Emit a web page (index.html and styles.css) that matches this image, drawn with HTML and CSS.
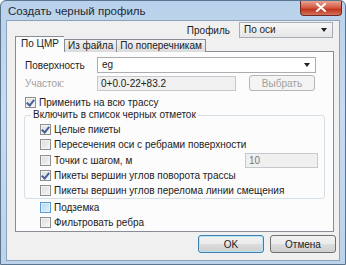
FILE: index.html
```html
<!DOCTYPE html>
<html lang="ru">
<head>
    <meta charset="UTF-8">
    <title>Создать черный профиль</title>
    <link rel="stylesheet" href="styles.css">
</head>
<body>
<div class="window">
    <div class="titlebar">
        <span class="title">Создать черный профиль</span>
        <span class="close">
            <svg width="12" height="9" viewBox="0 0 12 9"><path d="M2 1 L10 8 M10 1 L2 8" stroke="#fff" stroke-width="2.2" stroke-linecap="round"/></svg>
        </span>
    </div>
    <div class="client">
        <div class="profile-row">
            <span class="lbl">Профиль</span>
            <div class="combo combo-profile">По оси<span class="arrow"></span></div>
        </div>
        <div class="tabs">
            <div class="tab active">По ЦМР</div>
            <div class="tab">Из файла</div>
            <div class="tab">По поперечникам</div>
        </div>
        <div class="panel">
            <div class="row">
                <span class="field-lbl">Поверхность</span>
                <div class="combo combo-surface">eg<span class="arrow"></span></div>
            </div>
            <div class="row">
                <span class="field-lbl disabled">Участок:</span>
                <div class="textbox readonly range">0+0.0-22+83.2</div>
                <button class="btn btn-small" disabled>Выбрать</button>
            </div>
            <label class="check whole"><span class="box checked"></span>Применить на всю трассу</label>
            <div class="group">
                <div class="legend">Включить в список черных отметок</div>
                <label class="check"><span class="box checked"></span>Целые пикеты</label>
                <label class="check"><span class="box"></span>Пересечения оси с ребрами поверхности</label>
                <div class="check step">
                    <span class="box"></span>Точки с шагом, м
                    <div class="textbox readonly stepbox">10</div>
                </div>
                <label class="check"><span class="box checked"></span>Пикеты вершин углов поворота трассы</label>
                <label class="check"><span class="box"></span>Пикеты вершин углов перелома линии смещения</label>
            </div>
            <label class="check outer first"><span class="box hover"></span>Подземка</label>
            <label class="check outer"><span class="box"></span>Фильтровать ребра</label>
        </div>
        <div class="buttons">
            <button class="btn btn-default">OK</button>
            <button class="btn">Отмена</button>
        </div>
    </div>
</div>
</body>
</html>
```

FILE: styles.css
```css
body { margin: 0; padding: 0; background: #fff; font-family: "Liberation Sans", Arial, sans-serif; font-size: 10px; color: #222; }
.window { width: 346px; height: 265px; background: linear-gradient(to bottom, #b9d1ea, #c7dcf2 40%, #bcd3eb); box-sizing: border-box; border: 1px solid #5b7490; border-radius: 6px 6px 0 0; display: flex; flex-direction: column; }
.titlebar { height: 19px; display: flex; align-items: center; justify-content: space-between; padding-left: 7px; }
.title { font-size: 11.5px; color: #1e2a36; margin-top: 1px; }
.close { width: 40px; height: 14px; margin-right: 3px; margin-top: -5px; border: 1px solid #6e2b25; border-top: none; border-radius: 0 0 4px 4px; background: linear-gradient(to bottom, #e8a493, #d2563e 50%, #c0361f 60%, #d4705a); display: flex; align-items: center; justify-content: center; }
.client { margin: 0 5px 0 5px; height: 239px; background: #f0f0f0; border: 1px solid #8da2b9; display: flex; flex-direction: column; }
.profile-row { display: flex; justify-content: flex-end; align-items: center; height: 16px; margin-top: 1px; padding-right: 6px; }
.profile-row .lbl { margin-right: 9px; }
.combo { position: relative; height: 16px; box-sizing: border-box; border: 1px solid #a5acb5; background: linear-gradient(#f6f6f6, #e6e6e6); padding-left: 4px; line-height: 14px; }
.combo-profile { width: 94px; }
.combo-surface { width: 219px; background: #fff; border-color: #abadb3; }
.arrow { position: absolute; right: 5px; top: 5px; border-left: 3.5px solid transparent; border-right: 3.5px solid transparent; border-top: 4px solid #222; }
.tabs { display: flex; align-items: flex-end; height: 15px; margin-left: 8px; margin-top: -1px; position: relative; z-index: 1; }
.tab { height: 12px; line-height: 12px; padding: 0 3px; border: 1px solid #898c95; border-bottom: none; margin-right: -1px; background: linear-gradient(#f2f2f2, #dcdcdc); }
.tab.active { height: 15px; line-height: 14px; background: #fcfcfc; padding: 0 5px; margin-right: 0; border-right: none; }
.panel { margin-left: 8px; width: 319px; height: 181px; box-sizing: border-box; border: 1px solid #898c95; background: #fcfcfc; margin-top: -1px; padding: 4px 0 0 9px; }
.row { display: flex; align-items: center; height: 18px; }
.field-lbl { width: 72px; }
.disabled { color: #a0a0a0; }
.textbox { height: 15px; box-sizing: border-box; border: 1px solid #c6c8cc; background: #fff; padding-left: 3px; line-height: 13px; }
.textbox.readonly { background: #f0f0f0; }
.range { width: 139px; margin-right: 13px; }
.btn { font-family: inherit; font-size: 10px; color: #222; height: 18px; box-sizing: border-box; border: 1px solid #707070; border-radius: 3px; background: linear-gradient(#f2f2f2 0%, #ebebeb 50%, #dddddd 51%, #cfcfcf 100%); padding: 0; }
.btn:disabled { color: #a0a0a0; border-color: #b5b5b5; background: #f4f4f4; }
.btn-small { width: 66px; height: 16px; }
.check { display: flex; align-items: center; height: 15px; }
.box { flex: none; width: 9px; height: 9px; border: 1px solid #8e8f8f; background: linear-gradient(135deg, #dcdcdc, #f6f6f6); margin-right: 3px; position: relative; box-shadow: inset 0 0 0 1px #f4f4f4; }
.box.hover { border-color: #5b9cd4; background: linear-gradient(135deg, #b2d8f4, #e2f2fc); box-shadow: inset 0 0 0 1px #dff0fb; }
.box.checked::after { content: ""; position: absolute; left: 2px; top: 0; width: 3px; height: 6px; border: solid #4a5f97; border-width: 0 2px 2px 0; transform: rotate(40deg); }
.whole { margin-top: 2px; height: 16px; }
.group { margin: 5px 0 0 -1px; width: 301px; height: 84px; box-sizing: border-box; border: 1px solid #d5dfe5; border-radius: 3px; padding: 0 0 0 15px; }
.legend { width: max-content; height: 12px; line-height: 12px; margin: -7px 0 0 -9px; padding: 0 2px; background: #fcfcfc; }
.group .check { height: 15px; }
.group .legend + .check { margin-top: 1px; }
.step { height: 16px !important; }
.stepbox { width: 73px; margin-left: auto; margin-right: 6px; color: #777; }
.outer { margin-left: 15px; }
.outer.first { margin-top: 1px; }
.buttons { display: flex; justify-content: flex-end; gap: 6px; margin-top: 3px; padding-right: 3px; }
.buttons .btn { width: 66px; }
.btn-default { border-color: #3c7fb1; box-shadow: inset 0 0 0 1px #b9e3f8; }
```
